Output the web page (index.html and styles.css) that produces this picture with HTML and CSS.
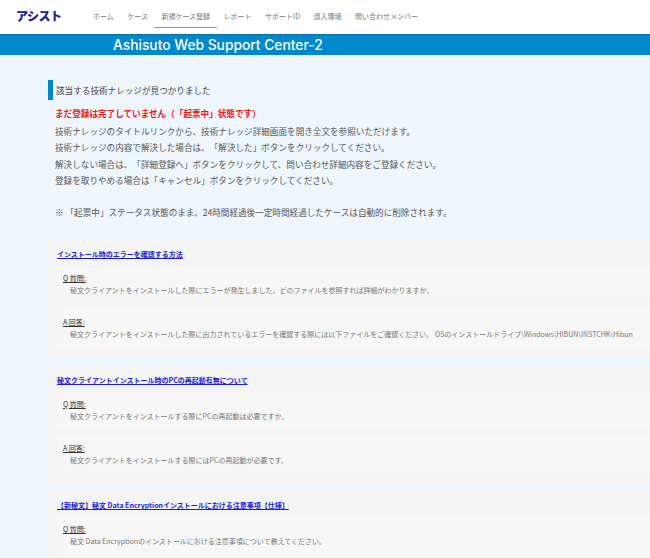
FILE: index.html
```html
<!DOCTYPE html>
<html lang="ja">
<head>
<meta charset="utf-8">
<title>Ashisuto Web Support Center-2</title>
<link rel="stylesheet" href="styles.css">
</head>
<body>
<header class="topbar">
  <div class="logo">アシスト</div>
  <nav class="nav">
    <a class="nav-item">ホーム</a>
    <a class="nav-item">ケース</a>
    <a class="nav-item is-active">新規ケース登録</a>
    <a class="nav-item">レポート</a>
    <a class="nav-item">サポートID</a>
    <a class="nav-item">導入環境</a>
    <a class="nav-item">問い合わせメンバー</a>
  </nav>
</header>
<div class="band"><span class="band-title">Ashisuto Web Support Center-2</span></div>
<main class="main">
  <h2 class="heading">該当する技術ナレッジが見つかりました</h2>
  <p class="warn">まだ登録は完了していません（「起票中」状態です）</p>
  <div class="intro">
    <p>技術ナレッジのタイトルリンクから、技術ナレッジ詳細画面を開き全文を参照いただけます。</p>
    <p>技術ナレッジの内容で解決した場合は、「解決した」ボタンをクリックしてください。</p>
    <p>解決しない場合は、「詳細登録へ」ボタンをクリックして、問い合わせ詳細内容をご登録ください。</p>
    <p>登録を取りやめる場合は「キャンセル」ボタンをクリックしてください。</p>
  </div>
  <p class="note">※ 「起票中」ステータス状態のまま、24時間経過後一定時間経過したケースは自動的に削除されます。</p>

  <section class="card">
    <a class="card-title">インストール時のエラーを確認する方法</a>
    <div class="qa">
      <div class="qa-label">Q 質問:</div>
      <div class="qa-text">秘文クライアントをインストールした際にエラーが発生しました。どのファイルを参照すれば詳細がわかりますか。</div>
    </div>
    <div class="qa">
      <div class="qa-label">A 回答:</div>
      <div class="qa-text">秘文クライアントをインストールした際に出力されているエラーを確認する際には以下ファイルをご確認ください。 OSのインストールドライブ\Windows\HIBUN\INSTCHK\Hibun</div>
    </div>
  </section>

  <section class="card">
    <a class="card-title">秘文クライアントインストール時のPCの再起動有無について</a>
    <div class="qa">
      <div class="qa-label">Q 質問:</div>
      <div class="qa-text">秘文クライアントをインストールする際にPCの再起動は必要ですか。</div>
    </div>
    <div class="qa">
      <div class="qa-label">A 回答:</div>
      <div class="qa-text">秘文クライアントをインストールする際にはPCの再起動が必要です。</div>
    </div>
  </section>

  <section class="card card-last">
    <a class="card-title">【新秘文】秘文 Data Encryptionインストールにおける注意事項【仕様】</a>
    <div class="qa">
      <div class="qa-label">Q 質問:</div>
      <div class="qa-text">秘文 Data Encryptionのインストールにおける注意事項について教えてください。</div>
    </div>
  </section>
</main>
</body>
</html>
```
FILE: styles.css
```css
* { box-sizing: border-box; }
html, body { margin: 0; padding: 0; }
body {
  width: 650px;
  height: 558px;
  overflow: hidden;
  background: #eef6fc;
  font-family: "Noto Sans CJK JP", "Noto Sans", sans-serif;
  color: #444;
  text-spacing-trim: space-all;
}
p, h2 { margin: 0; font-weight: 400; }
.topbar {
  display: flex;
  height: 35px;
  background: #fff;
  border-bottom: 1px solid #0a6fa8;
  padding-left: 16px;
}
.logo {
  width: 77px;
  height: 34px;
  padding-top: 6px;
  font-size: 12px;
  line-height: 20px;
  font-weight: 900;
  letter-spacing: -0.5px;
  color: #1d2088;
  white-space: nowrap;
}
.nav { display: flex; gap: 13.5px; }
.nav-item {
  height: 28px;
  padding: 9px 0 0;
  font-size: 7px;
  line-height: 14px;
  color: #777;
  white-space: nowrap;
}
.nav-item.is-active {
  padding: 9px 7px 0;
  margin: 0 -7px;
  border-bottom: 1px solid #5aa9d6;
}
.band {
  display: flex;
  align-items: center;
  height: 21px;
  background: #0088cc;
  border-bottom: 1px solid #fff;
  padding-left: 113px;
  color: #fff;
}
.band-title {
  font-family: Inter, sans-serif;
  font-size: 13.8px;
  font-weight: 500;
  line-height: 18px;
  white-space: nowrap;
}
.main { padding: 24px 0 0 48px; height: 502px; overflow: hidden; }
.heading {
  height: 20px;
  border-left: 5px solid #0088cc;
  padding-left: 3px;
  font-size: 8.6px;
  line-height: 20px;
  color: #444;
}
.warn {
  margin: 5px 0 0 7px;
  font-size: 8.6px;
  line-height: 16px;
  font-weight: 700;
  color: #f01414;
}
.intro { margin: 2px 0 0 7px; font-size: 8.6px; line-height: 16.3px; color: #555; }
.note { margin: 16px 0 0 7px; font-size: 8.6px; line-height: 16px; color: #555; white-space: nowrap; }
.card {
  height: 117px;
  margin: 0 0 8.5px;
  padding: 7px 0 0 9px;
  background: #f4f4f4;
}
.main .card:first-of-type { margin-top: 20px; }
.card-last { height: 67px; margin-bottom: 0; }
.card-title {
  display: block;
  width: max-content;
  height: 15px;
  font-size: 7px;
  line-height: 14px;
  font-weight: 700;
  color: #1a1ae6;
  text-decoration: underline;
  white-space: nowrap;
}
.qa {
  height: 37px;
  margin: 4px 0 7px;
  padding: 6px 0 0 6px;
  background: #f6f6f6;
}
.qa-label {
  font-size: 7px;
  line-height: 12px;
  color: #333;
  text-decoration: underline;
}
.qa-text {
  padding-left: 7px;
  font-size: 7px;
  line-height: 12px;
  color: #777;
  white-space: nowrap;
}
```
